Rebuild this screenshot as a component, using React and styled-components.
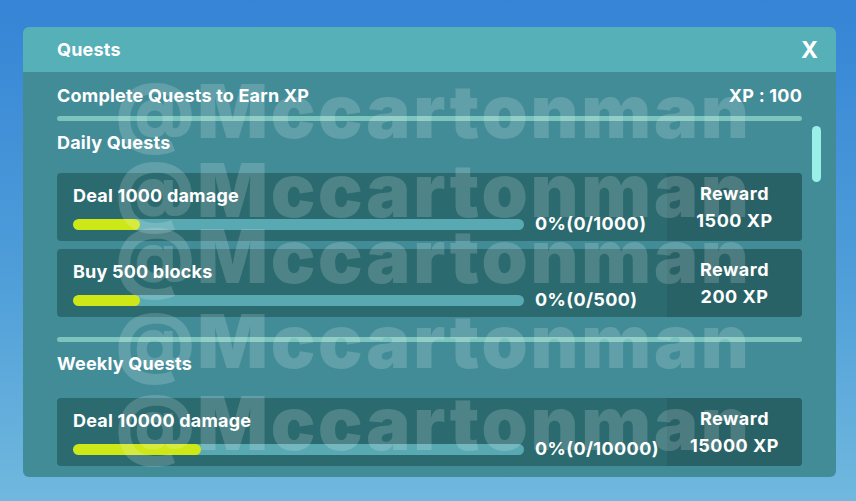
import styled, { createGlobalStyle } from 'styled-components';

const GlobalStyle = createGlobalStyle`
  html, body {
    margin: 0;
    padding: 0;
  }
  body {
    font-family: Inter, 'Noto Sans', 'Liberation Sans', sans-serif;
    color: #ffffff;
  }
`;

const Page = styled.div`
  position: relative;
  width: 856px;
  height: 501px;
  box-sizing: border-box;
  padding: 27px 20px 24px 23px;
  background: linear-gradient(180deg, #3584d6 0%, #4f9ed9 55%, #70b8de 100%);
  overflow: hidden;
`;

const Panel = styled.div`
  position: relative;
  width: 813px;
  height: 450px;
  border-radius: 6px;
  overflow: hidden;
  background: #428c98;
  display: flex;
  flex-direction: column;
`;

const PanelHeader = styled.div`
  height: 45px;
  flex-shrink: 0;
  display: flex;
  align-items: center;
  justify-content: space-between;
  padding: 0 18px 0 34px;
  background: #55b0b8;
`;

const PanelTitle = styled.h1`
  margin: 0;
  font-size: 18px;
  font-weight: 700;
  line-height: 20px;
  letter-spacing: 0.2px;
`;

const CloseButton = styled.button`
  border: none;
  background: none;
  padding: 0;
  color: #ffffff;
  font-family: inherit;
  font-size: 23px;
  font-weight: 700;
  line-height: 24px;
  cursor: pointer;
`;

const PanelBody = styled.div`
  padding: 14px 34px 0;
`;

const Row = styled.div`
  display: flex;
  justify-content: space-between;
  align-items: center;
  font-size: 18px;
  font-weight: 700;
  line-height: 20px;
  letter-spacing: 0.2px;
`;

const Divider = styled.div`
  height: 5px;
  border-radius: 3px;
  background: #7cc4bd;
  margin-top: ${(props) => props.$top || 10}px;
`;

const SectionTitle = styled.h2`
  margin: 12px 0 ${(props) => props.$after}px;
  font-size: 18px;
  font-weight: 700;
  line-height: 20px;
  letter-spacing: 0.2px;
`;

const QuestList = styled.div`
  display: flex;
  flex-direction: column;
  gap: 8px;
`;

const QuestCard = styled.div`
  display: flex;
  height: 68px;
  border-radius: 4px;
  overflow: hidden;
  background: #2b6b70;
`;

const QuestInfo = styled.div`
  flex: 1;
  padding: 13px 0 0 16px;
`;

const QuestName = styled.div`
  font-size: 18px;
  font-weight: 700;
  line-height: 20px;
  letter-spacing: 0.2px;
`;

const ProgressRow = styled.div`
  display: flex;
  align-items: center;
  gap: 11px;
  margin-top: 8px;
`;

const Track = styled.div`
  width: 451px;
  height: 11px;
  border-radius: 6px;
  background: #58a9b1;
  overflow: hidden;
`;

const Fill = styled.div`
  height: 100%;
  border-radius: 6px;
  background: #cde717;
`;

const Percent = styled.span`
  font-size: 18px;
  font-weight: 700;
  line-height: 20px;
  letter-spacing: 0.4px;
  white-space: nowrap;
`;

const RewardBox = styled.div`
  width: 135px;
  display: flex;
  flex-direction: column;
  align-items: center;
  justify-content: center;
  gap: 7px;
  background: #286266;
  font-size: 18px;
  font-weight: 700;
  line-height: 20px;
  letter-spacing: 0.5px;
`;

const ScrollThumb = styled.div`
  position: absolute;
  left: 789px;
  top: 99px;
  width: 9px;
  height: 56px;
  border-radius: 5px;
  background: #9aefe6;
`;

const Watermark = styled.div`
  position: absolute;
  inset: 0;
  pointer-events: none;
`;

const WatermarkLine = styled.div`
  position: absolute;
  left: 116px;
  top: ${(props) => props.$top}px;
  font-size: 74px;
  font-weight: 900;
  line-height: 74px;
  letter-spacing: 2.8px;
  color: rgba(255, 255, 255, 0.17);
  white-space: nowrap;
`;

const daily = [
  { name: 'Deal 1000 damage', done: 0, goal: 1000, reward: 1500, fill: 67 },
  { name: 'Buy 500 blocks', done: 0, goal: 500, reward: 200, fill: 67 },
];

const weekly = [
  { name: 'Deal 10000 damage', done: 0, goal: 10000, reward: 15000, fill: 128 },
];

function Quest({ quest }) {
  const pct = Math.round((quest.done / quest.goal) * 100);
  return (
    <QuestCard>
      <QuestInfo>
        <QuestName>{quest.name}</QuestName>
        <ProgressRow>
          <Track>
            <Fill style={{ width: quest.fill }} />
          </Track>
          <Percent>
            {pct}%({quest.done}/{quest.goal})
          </Percent>
        </ProgressRow>
      </QuestInfo>
      <RewardBox>
        <span>Reward</span>
        <span>{quest.reward} XP</span>
      </RewardBox>
    </QuestCard>
  );
}

export default function App() {
  return (
    <>
      <GlobalStyle />
      <Page>
        <Panel>
          <PanelHeader>
            <PanelTitle>Quests</PanelTitle>
            <CloseButton>X</CloseButton>
          </PanelHeader>
          <PanelBody>
            <Row>
              <span>Complete Quests to Earn XP</span>
              <span>XP : 100</span>
            </Row>
            <Divider />
            <SectionTitle $after={20}>Daily Quests</SectionTitle>
            <QuestList>
              {daily.map((q) => (
                <Quest key={q.name} quest={q} />
              ))}
            </QuestList>
            <Divider $top={20} />
            <SectionTitle $after={24}>Weekly Quests</SectionTitle>
            <QuestList>
              {weekly.map((q) => (
                <Quest key={q.name} quest={q} />
              ))}
            </QuestList>
          </PanelBody>
          <ScrollThumb />
        </Panel>
        <Watermark>
          {[74, 153, 219, 304, 386].map((top) => (
            <WatermarkLine key={top} $top={top}>
              @Mccartonman
            </WatermarkLine>
          ))}
        </Watermark>
      </Page>
    </>
  );
}
